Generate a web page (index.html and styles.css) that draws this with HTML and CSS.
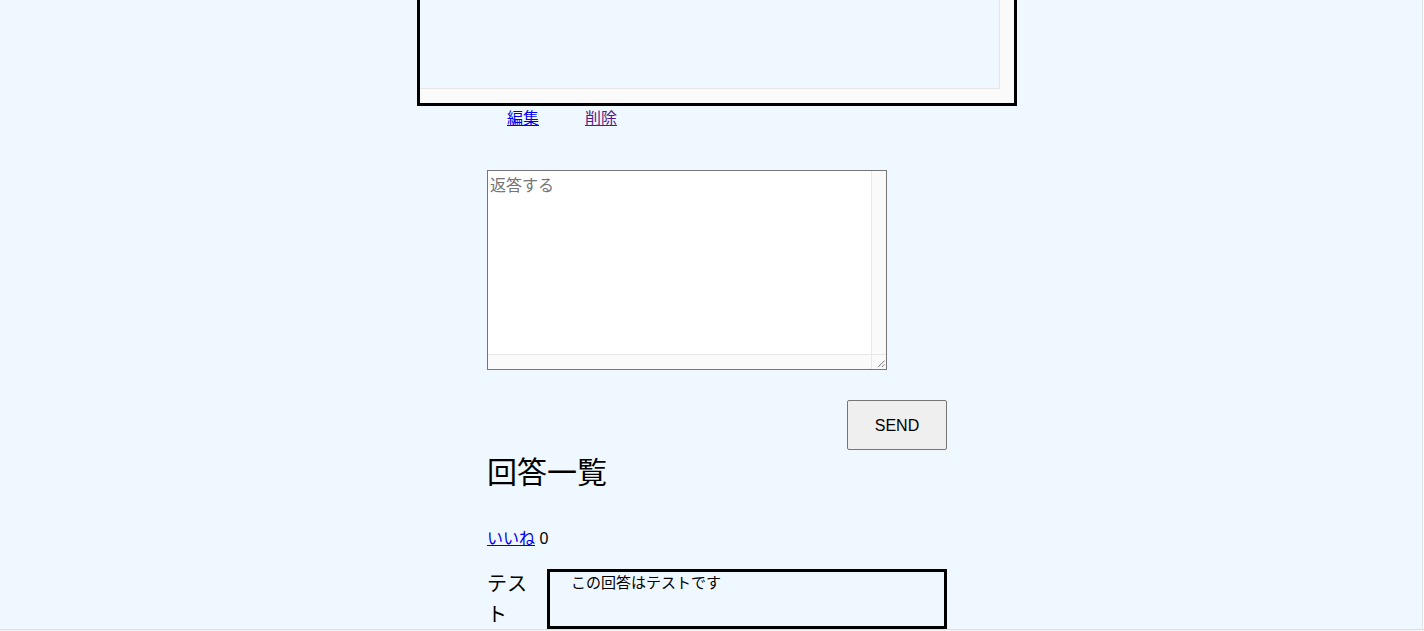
FILE: index.html
```html
<!DOCTYPE html>
<html lang="ja">
<head>
<meta charset="utf-8">
<title>質問</title>
<link rel="stylesheet" href="styles.css">
</head>
<body>
<main class="page">
  <div class="post-box">
    <div class="post-body"></div>
    <div class="track track-v"></div>
    <div class="track track-h"></div>
  </div>
  <div class="post-actions">
    <a href="#edit" class="link">編集</a>
    <a href="#delete" class="link visited">削除</a>
  </div>

  <form class="reply">
    <div class="textarea-wrap">
      <textarea class="reply-input" placeholder="返答する"></textarea>
      <div class="track track-v2"></div>
      <div class="track track-h2"></div>
      <div class="track corner">
        <svg width="15" height="15" viewBox="0 0 15 15"><path d="M13.5 6.5 L6.5 13.5 M13.5 10.5 L10.5 13.5" stroke="#6e6e6e" stroke-width="1" fill="none"/></svg>
      </div>
    </div>
    <div class="send-row"><button type="button" class="send">SEND</button></div>
  </form>

  <section class="answers">
    <h2 class="answers-title">回答一覧</h2>
    <p class="likes"><a href="#like" class="link">いいね</a> <span class="count">0</span></p>
    <div class="answer">
      <div class="answer-user">テスト</div>
      <div class="answer-box">この回答はテストです</div>
    </div>
  </section>
</main>
<div class="edge-right"></div>
<div class="edge-bottom"></div>
</body>
</html>
```
FILE: styles.css
```css
html, body {
  margin: 0;
  padding: 0;
  background: #f0f8ff;
  height: 100%;
  overflow: hidden;
}
body {
  font-family: "Liberation Sans", "Noto Sans CJK JP", sans-serif;
  color: #000;
}
.page {
  margin-left: 417px;
  width: 600px;
}
.post-box {
  box-sizing: border-box;
  width: 600px;
  height: 106px;
  border: 3px solid #000;
  border-top: none;
  display: grid;
  grid-template-columns: 1fr 14px;
  grid-template-rows: 1fr 14px;
  background: #fafafa;
}
.post-body {
  background: #f0f8ff;
  border-right: 1px solid #e6e6e6;
  border-bottom: 1px solid #e6e6e6;
}
.track { background: #fafafa; }
.track-h { grid-column: 1 / 3; }
.post-actions {
  padding-top: 1px;
  padding-left: 90px;
  display: flex;
  gap: 46px;
  font-size: 16px;
  line-height: 23px;
}
.link { color: #0000ee; }
.link.visited { color: #551a8b; }

.reply {
  margin: 40px 0 0 70px;
  width: 460px;
}
.textarea-wrap {
  box-sizing: border-box;
  width: 400px;
  height: 200px;
  border: 1px solid #767676;
  display: grid;
  grid-template-columns: 1fr 15px;
  grid-template-rows: 1fr 15px;
  background: #fff;
}
.reply-input {
  border: none;
  outline: none;
  resize: none;
  margin: 0;
  padding: 3px 2px 2px;
  font: 16px/23px "Liberation Sans", "Noto Sans CJK JP", sans-serif;
  background: #fff;
  overflow: hidden;
}
.reply-input::placeholder { color: #757575; }
.track-v2 { border-left: 1px solid #e8e8e8; }
.track-h2 { border-top: 1px solid #e8e8e8; }
.corner {
  border-left: 1px solid #e8e8e8;
  border-top: 1px solid #e8e8e8;
  display: flex;
  align-items: flex-end;
  justify-content: flex-end;
}
.corner svg { display: block; }
.send-row {
  margin-top: 30px;
  display: flex;
  justify-content: flex-end;
}
.send {
  width: 100px;
  height: 50px;
  background: #efefef;
  border: 1px solid #767676;
  border-radius: 2px;
  font: 16px "Liberation Sans", "Noto Sans CJK JP", sans-serif;
  color: #000;
  padding: 1px 0 0;
}

.answers {
  margin-left: 70px;
  width: 460px;
}
.answers-title {
  margin: 0;
  padding-top: 1px;
  font-size: 30px;
  font-weight: normal;
  line-height: 44px;
}
.likes {
  margin: 31px 0 0;
  height: 23px;
  font-family: "Noto Sans CJK JP", sans-serif;
  font-size: 16px;
  line-height: 23px;
}
.count {
  font-family: "Liberation Sans", sans-serif;
  padding-left: 1px;
  line-height: 1;
}
.answer {
  margin-top: 20px;
  display: grid;
  grid-template-columns: 50px 400px;
  column-gap: 10px;
}
.answer-user {
  font-size: 20px;
  line-height: 31px;
}
.answer-box {
  box-sizing: border-box;
  height: 60px;
  border: 3px solid #000;
  padding-left: 21px;
  font-size: 15px;
  line-height: 21px;
}

.edge-right {
  position: fixed;
  top: 0;
  right: 0;
  width: 2px;
  height: 100%;
  background: linear-gradient(to right, #e2e4e6 50%, #fbfbfb 50%);
}
.edge-bottom {
  position: fixed;
  left: 0;
  bottom: 0;
  width: 100%;
  height: 2px;
  background: linear-gradient(to bottom, #dde0e3 50%, #f4f5f6 50%);
}
```
